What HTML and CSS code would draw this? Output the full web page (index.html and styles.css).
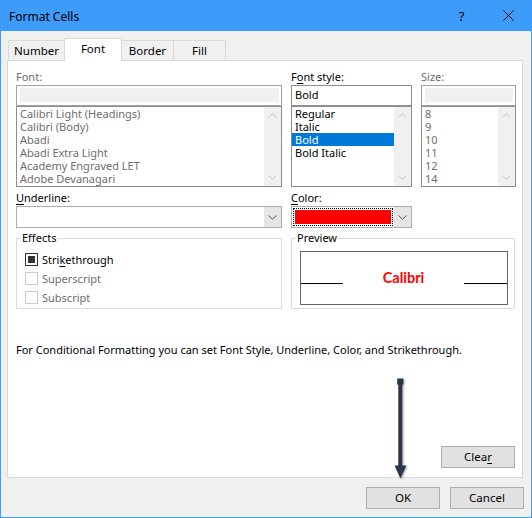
FILE: index.html
```html
<!DOCTYPE html>
<html>
<head>
<meta charset="utf-8">
<link rel="stylesheet" href="styles.css">
</head>
<body>
<div class="window">
  <div class="titlebar">
    <span class="title">Format Cells</span>
    <span class="capbtn help">?</span>
    <span class="capbtn close"><svg width="11" height="11" viewBox="0 0 11 11"><path d="M0.5 0.5L10.5 10.5M10.5 0.5L0.5 10.5" stroke="#000" stroke-width="1" fill="none"/></svg></span>
  </div>
  <div class="client">
    <div class="tabs">
      <div class="tab t-number">Number</div>
      <div class="tab t-font active">Font</div>
      <div class="tab t-border">Border</div>
      <div class="tab t-fill">Fill</div>
    </div>
    <div class="panel">
      <div class="row1">
        <div class="col c-font">
          <div class="lbl dis">Font:</div>
          <div class="edit dis"><div class="fill"></div></div>
          <div class="list">
            <ul class="items dis">
              <li>Calibri Light (Headings)</li>
              <li>Calibri (Body)</li>
              <li>Abadi</li>
              <li>Abadi Extra Light</li>
              <li>Academy Engraved LET</li>
              <li>Adobe Devanagari</li>
            </ul>
            <div class="sb">
              <svg width="9" height="5" viewBox="0 0 9 5"><path d="M0.5 4.5L4.5 0.8L8.5 4.5" stroke="#c4c4c4" fill="none"/></svg>
              <svg width="9" height="5" viewBox="0 0 9 5"><path d="M0.5 0.5L4.5 4.2L8.5 0.5" stroke="#c4c4c4" fill="none"/></svg>
            </div>
          </div>
        </div>
        <div class="col c-style">
          <div class="lbl">F<u>o</u>nt style:</div>
          <div class="edit">Bold</div>
          <div class="list">
            <ul class="items">
              <li>Regular</li>
              <li>Italic</li>
              <li class="sel">Bold</li>
              <li>Bold Italic</li>
            </ul>
            <div class="sb">
              <svg width="9" height="5" viewBox="0 0 9 5"><path d="M0.5 4.5L4.5 0.8L8.5 4.5" stroke="#c4c4c4" fill="none"/></svg>
              <svg width="9" height="5" viewBox="0 0 9 5"><path d="M0.5 0.5L4.5 4.2L8.5 0.5" stroke="#c4c4c4" fill="none"/></svg>
            </div>
          </div>
        </div>
        <div class="col c-size">
          <div class="lbl dis">Size:</div>
          <div class="edit dis"><div class="fill"></div></div>
          <div class="list">
            <ul class="items dis">
              <li>8</li>
              <li>9</li>
              <li>10</li>
              <li>11</li>
              <li>12</li>
              <li>14</li>
            </ul>
            <div class="sb">
              <svg width="9" height="5" viewBox="0 0 9 5"><path d="M0.5 4.5L4.5 0.8L8.5 4.5" stroke="#c4c4c4" fill="none"/></svg>
              <svg width="9" height="5" viewBox="0 0 9 5"><path d="M0.5 0.5L4.5 4.2L8.5 0.5" stroke="#c4c4c4" fill="none"/></svg>
            </div>
          </div>
        </div>
      </div>

      <div class="row2">
        <div class="col c-under">
          <div class="lbl"><u>U</u>nderline:</div>
          <div class="combo">
            <div class="cfield"></div>
            <div class="cbtn"><svg width="9" height="5" viewBox="0 0 9 5"><path d="M0.5 0.5L4.5 4.2L8.5 0.5" stroke="#555" fill="none"/></svg></div>
          </div>
        </div>
        <div class="col c-color">
          <div class="lbl"><u>C</u>olor:</div>
          <div class="combo">
            <div class="cfield"><div class="focus"><div class="swatch"></div></div></div>
            <div class="cbtn"><svg width="9" height="5" viewBox="0 0 9 5"><path d="M0.5 0.5L4.5 4.2L8.5 0.5" stroke="#555" fill="none"/></svg></div>
          </div>
        </div>
      </div>

      <div class="row3">
        <fieldset class="group g-effects">
          <legend>Effects</legend>
          <div class="check"><span class="cb on"></span><span>Stri<u>k</u>ethrough</span></div>
          <div class="check dis"><span class="cb"></span><span>Superscript</span></div>
          <div class="check dis"><span class="cb"></span><span>Subscript</span></div>
        </fieldset>
        <fieldset class="group g-preview">
          <legend>Preview</legend>
          <div class="pv-box">
            <div class="pv-line pv-left"></div>
            <div class="pv-text">Calibri</div>
            <div class="pv-line pv-right"></div>
          </div>
        </fieldset>
      </div>

      <p class="info">For Conditional Formatting you can set Font Style, Underline, Color, and Strikethrough.</p>

      <div class="clear-row"><button class="btn clear">Clea<u>r</u></button></div>
    </div>
    <div class="footer">
      <button class="btn">OK</button>
      <button class="btn">Cancel</button>
    </div>
  </div>
  <svg class="arrow" width="532" height="518" viewBox="0 0 532 518">
    <g fill="#2b3448">
      <rect x="397.2" y="378.5" width="6.2" height="6"/>
      <rect x="398.3" y="380" width="4" height="88"/>
      <polygon points="394.6,465.5 406.4,465.5 400.4,478.5"/>
    </g>
  </svg>
</div>
</body>
</html>
```

FILE: styles.css
```css
* { box-sizing: border-box; }
html, body { margin: 0; padding: 0; background: #fff; }
body {
  font-family: "Noto Sans", "Open Sans", sans-serif;
  font-size: 11px;
  color: #000;
}
u { text-decoration: underline; text-underline-offset: 2px; }

.window {
  position: relative;
  width: 532px;
  height: 518px;
  border: 1px solid #3d9bf9;
  background: #f0f0f0;
  display: flex;
  flex-direction: column;
}

.titlebar {
  flex: none;
  height: 30px;
  background: #3d9bf9;
  display: flex;
  align-items: center;
  padding-left: 8px;
}
.title { flex: 1; font-size: 12px; }
.capbtn {
  width: 46px;
  height: 30px;
  display: flex;
  align-items: center;
  justify-content: center;
}
.help { font-size: 13px; padding-right: 1px; }
.close { padding-left: 1px; padding-bottom: 1px; }

.client {
  flex: 1;
  display: flex;
  flex-direction: column;
  padding-top: 7px;
}

.tabs {
  display: flex;
  align-items: flex-end;
  height: 22px;
  padding-left: 7px;
}
.tab {
  height: 20px;
  border: 1px solid #d9d9d9;
  border-bottom: none;
  background: #f0f0f0;
  display: flex;
  align-items: center;
  justify-content: center;
  margin-left: -1px;
  padding-bottom: 1px;
  font-size: 11.5px;
}
.tab:first-child { margin-left: 0; }
.tab.active {
  height: 23px;
  margin-bottom: -1px;
  background: #fff;
  z-index: 1;
  padding-bottom: 3px;
}
.t-number { width: 57px; }
.t-font { width: 58px; }
.t-border { width: 53px; }
.t-fill { width: 53px; }

.panel {
  margin-left: 6px;
  width: 516px;
  height: 418px;
  border: 1px solid #d9d9d9;
  background: #fff;
  padding: 8px 6px 9px 8px;
  display: flex;
  flex-direction: column;
}

.row1, .row2, .row3 { display: flex; gap: 9px; }
.c-font, .c-under { width: 266px; }
.c-style, .c-color { width: 121px; }
.c-size { width: 95px; }

.lbl { height: 16px; line-height: 16px; }
.dis, .dis .lbl { color: #6d6d6d; }

.edit {
  height: 21px;
  border: 1px solid #8e8e8e;
  background: #fff;
  padding-left: 3px;
  line-height: 18px;
}
.edit.dis { padding: 2px 2px 3px 3px; border-color: #a2a2a2; }
.edit .fill { height: 100%; background: #f0f0f0; }

.list {
  height: 81px;
  border: 1px solid #8e8e8e;
  background: #fff;
  display: flex;
}
.items {
  flex: 1;
  margin: 0;
  padding: 0;
  list-style: none;
}
.items li {
  height: 13px;
  line-height: 13px;
  padding-left: 3px;
  white-space: nowrap;
}
.items li.sel { background: #0078d7; color: #fff; }
.sb {
  width: 17px;
  background: #f0f0f0;
  display: flex;
  flex-direction: column;
  align-items: center;
  justify-content: space-between;
  padding: 6px 0;
}
.sb svg { display: block; }

.row2 { margin-top: 3px; }
.combo {
  height: 22px;
  border: 1px solid #adadad;
  background: #fff;
  display: flex;
}
.cfield { flex: 1; padding: 1px; }
.focus { height: 100%; border: 1px dotted #000; padding: 1px; }
.swatch { height: 100%; background: #ff0000; }
.cbtn {
  width: 17px;
  background: #e5e5e5;
  display: flex;
  align-items: center;
  justify-content: center;
}
.cbtn svg { display: block; }

.row3 { margin-top: 2px; }
.group {
  margin: 0;
  min-width: 0;
  height: 79px;
  border: 1px solid #dcdcdc;
  padding: 4px 4px 1px 4px;
}
.group legend {
  padding: 0 1px;
  line-height: 16px;
  height: 16px;
}
.g-effects { width: 266px; }
.g-preview { width: 224px; }

.check {
  height: 19px;
  display: flex;
  align-items: center;
  padding-left: 4px;
}
.cb {
  width: 13px;
  height: 13px;
  border: 1px solid #333;
  background: #fff;
  display: flex;
  align-items: center;
  justify-content: center;
  margin-right: 4px;
}
.cb.on::after {
  content: "";
  width: 7px;
  height: 7px;
  background: #333;
}
.check.dis .cb { border-color: #cccccc; }

.pv-box {
  margin: 1px 0 0 4px;
  width: 208px;
  height: 54px;
  border: 1px solid #646464;
  display: flex;
  align-items: flex-start;
}
.pv-line { height: 1px; background: #000; margin-top: 31px; }
.pv-left { width: 42px; }
.pv-right { width: 43px; }
.pv-text {
  flex: 1;
  text-align: center;
  margin-top: 16px;
  line-height: 20px;
  font-family: Lato, "Noto Sans", sans-serif;
  font-weight: 700;
  font-size: 14.5px;
  color: #ff0000;
}

.info {
  margin: 33px 0 0 0;
  line-height: 16px;
  white-space: nowrap;
}

.clear-row {
  margin-top: auto;
  display: flex;
  justify-content: flex-end;
  padding-right: 1px;
}

.btn {
  width: 74px;
  height: 22px;
  border: 1px solid #adadad;
  background: #e1e1e1;
  font: inherit;
  font-size: 11.5px;
  color: #000;
  padding: 0;
  margin: 0;
  line-height: 18px;
}

.footer {
  display: flex;
  justify-content: flex-end;
  gap: 10px;
  margin-top: 9px;
  padding-right: 7px;
}

.arrow {
  position: absolute;
  left: -1px;
  top: -1px;
  pointer-events: none;
  filter: drop-shadow(1px 1px 1px rgba(0, 0, 0, 0.35));
}
```
